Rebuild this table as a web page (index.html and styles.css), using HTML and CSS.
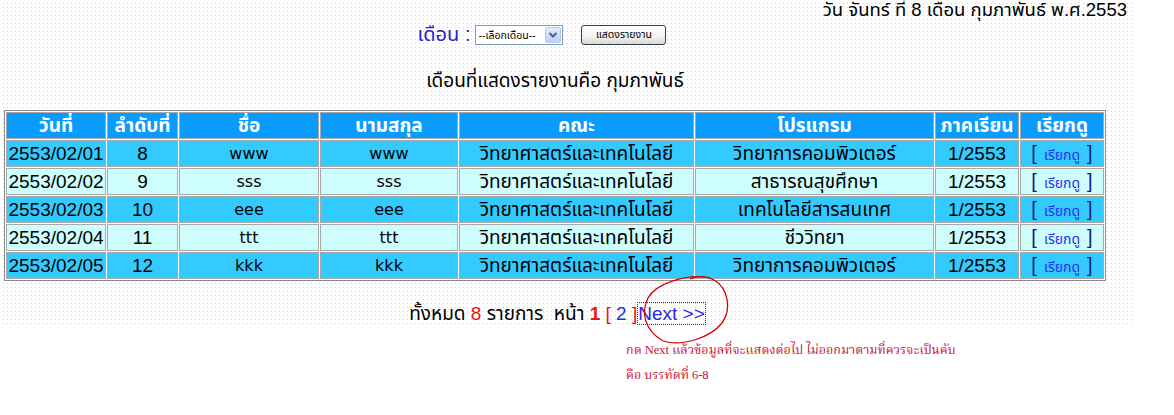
FILE: index.html
```html
<!DOCTYPE html>
<html lang="th">
<head>
<meta charset="utf-8">
<title>รายงาน</title>
<link rel="stylesheet" href="styles.css">
</head>
<body>
<div class="page">
  <div class="date">วัน จันทร์ ที่ 8 เดือน กุมภาพันธ์ พ.ศ.2553</div>
  <div class="main">
    <form class="picker">
      <span class="lbl">เดือน :</span>
      <span class="selbox"><select class="sel"><option>--เลือกเดือน--</option></select><span class="arrow"><svg width="14" height="14" viewBox="0 0 14 14"><path d="M3.5 5 L7 8.5 L10.5 5" fill="none" stroke="#4d6185" stroke-width="2"/></svg></span></span>
      <button type="button" class="btn">แสดงรายงาน</button>
    </form>
    <p class="current">เดือนที่แสดงรายงานคือ กุมภาพันธ์</p>
    <table class="report">
      <colgroup>
        <col style="width:100px"><col style="width:71px"><col style="width:140px"><col style="width:138px"><col style="width:235px"><col style="width:239px"><col style="width:84px"><col style="width:84px">
      </colgroup>
      <thead>
        <tr><th>วันที่</th><th>ลำดับที่</th><th>ชื่อ</th><th>นามสกุล</th><th>คณะ</th><th>โปรแกรม</th><th>ภาคเรียน</th><th>เรียกดู</th></tr>
      </thead>
      <tbody>
        <tr class="odd"><td>2553/02/01</td><td>8</td><td class="lat">www</td><td class="lat">www</td><td>วิทยาศาสตร์และเทคโนโลยี</td><td>วิทยาการคอมพิวเตอร์</td><td>1/2553</td><td><span class="br">[</span><a href="#">เรียกดู</a><span class="br">]</span></td></tr>
        <tr class="even"><td>2553/02/02</td><td>9</td><td class="lat">sss</td><td class="lat">sss</td><td>วิทยาศาสตร์และเทคโนโลยี</td><td>สาธารณสุขศึกษา</td><td>1/2553</td><td><span class="br">[</span><a href="#">เรียกดู</a><span class="br">]</span></td></tr>
        <tr class="odd"><td>2553/02/03</td><td>10</td><td class="lat">eee</td><td class="lat">eee</td><td>วิทยาศาสตร์และเทคโนโลยี</td><td>เทคโนโลยีสารสนเทศ</td><td>1/2553</td><td><span class="br">[</span><a href="#">เรียกดู</a><span class="br">]</span></td></tr>
        <tr class="even"><td>2553/02/04</td><td>11</td><td class="lat">ttt</td><td class="lat">ttt</td><td>วิทยาศาสตร์และเทคโนโลยี</td><td>ชีววิทยา</td><td>1/2553</td><td><span class="br">[</span><a href="#">เรียกดู</a><span class="br">]</span></td></tr>
        <tr class="odd"><td>2553/02/05</td><td>12</td><td class="lat">kkk</td><td class="lat">kkk</td><td>วิทยาศาสตร์และเทคโนโลยี</td><td>วิทยาการคอมพิวเตอร์</td><td>1/2553</td><td><span class="br">[</span><a href="#">เรียกดู</a><span class="br">]</span></td></tr>
      </tbody>
    </table>
    <div class="pager">ทั้งหมด <span class="red">8</span> รายการ &nbsp;หน้า <b class="red">1</b> <span class="red">[</span> <a href="#" class="pg">2</a> <span class="red">]</span><a href="#" class="next">Next &gt;&gt;</a></div>
  </div>
</div>
<div class="note">
  <p>กด Next แล้วข้อมูลที่จะแสดงต่อไป ไม่ออกมาตามที่ควรจะเป็นคับ</p>
  <p>คือ บรรทัดที่ 6-8</p>
</div>
<svg class="mark" width="1174" height="415" viewBox="0 0 1174 415"><path d="M704 277 C686 275 656 283 648 298 C641 312 644 330 663 341 C683 347 711 337 722 323 C732 309 728 288 714 280 C707 276 698 276 690 279" fill="none" stroke="#d40000" stroke-width="1.3"/></svg>
</body>
</html>
```
FILE: styles.css
```css
html, body {
  margin: 0;
  padding: 0;
  background: #fff;
}
body {
  position: relative;
  width: 1174px;
  height: 415px;
  overflow: hidden;
  font-family: "Liberation Sans", "Noto Sans Thai", "Noto Sans Thai UI", sans-serif;
  color: #000;
}
.page {
  width: 1135px;
  height: 326px;
  background-color: #fff;
  background-image:
    linear-gradient(to right, #fff 3px, transparent 3px),
    linear-gradient(to bottom, #fff 3px, #d4d4d4 3px);
  background-size: 4px 4px;
  overflow: hidden;
}
.date {
  text-align: right;
  padding-right: 8px;
  font-size: 18.5px;
  line-height: 20px;
  margin-top: 0;
}
.main {
  width: 1110px;
  display: flex;
  flex-direction: column;
  align-items: center;
}
.picker {
  display: flex;
  align-items: center;
  margin: 4px 26px 0 0;
  height: 22px;
}
.lbl {
  color: #2424c8;
  font-size: 20px;
  margin-right: 5px;
}
.selbox {
  display: flex;
  width: 88px;
  height: 20px;
  box-sizing: border-box;
  border: 1px solid #7f9db9;
  background: #fff;
}
.sel {
  appearance: none;
  -webkit-appearance: none;
  border: 0;
  background: transparent;
  font: 10.5px "Liberation Sans", "Noto Sans Thai", sans-serif;
  padding: 0 0 0 2px;
  width: 70px;
  height: 18px;
  color: #000;
}
.arrow {
  width: 16px;
  height: 16px;
  margin: 1px;
  box-sizing: border-box;
  border: 1px solid #b9cbf3;
  border-radius: 2px;
  background: linear-gradient(#e1ebfd, #bccff8);
  display: flex;
  align-items: center;
  justify-content: center;
}
.btn {
  margin-left: 18px;
  width: 85px;
  height: 20px;
  box-sizing: border-box;
  border: 1px solid #2e3e55;
  border-radius: 3px;
  background: linear-gradient(#ffffff, #f3f2ee 60%, #d9d6c9);
  font: 10.5px "Liberation Sans", "Noto Sans Thai", sans-serif;
  color: #000;
  padding: 0;
}
.current {
  margin: 24px 0 0;
  font-size: 19px;
  line-height: 22px;
}
.report {
  margin-top: 18px;
  table-layout: fixed;
  width: 1102px;
  border: 1px solid #8c8c8c;
  border-spacing: 1px;
  background: #fff;
  font-size: 19px;
}
.report th, .report td {
  border: 1px solid #a8a8a8;
  padding: 0;
  height: 25px;
  line-height: 22px;
  text-align: center;
  white-space: nowrap;
  overflow: hidden;
}
.report td.lat {
  font-family: "DejaVu Sans", sans-serif;
  font-size: 16px;
}
.report th {
  background: #0a9bff;
  color: #fff;
  font-weight: bold;
}
.odd td { background: #33cbff; }
.even td { background: #cdfdfd; }
.br {
  color: #1a1a80;
  font-size: 20px;
  font-weight: 300;
}
.report a {
  color: #2c2cf0;
  font-size: 14px;
  text-decoration: none;
  margin: 0 7px;
}
.pager {
  margin-top: 22px;
  font-size: 19px;
  line-height: 22px;
  padding-left: 4px;
}
.red { color: #ee1111; }
.pg { color: #2a2adc; text-decoration: none; }
.next {
  color: #2a2adc;
  text-decoration: none;
  outline: 1px dotted #333;
  outline-offset: 0;
  margin-left: 1px;
}
.note {
  margin: 15px 0 0 626px;
  color: #c8102e;
  font-family: "Liberation Serif", "Noto Serif Thai", "Noto Sans Thai", serif;
  font-size: 12.5px;
}
.note p {
  margin: 0 0 7px;
  line-height: 18px;
}
.mark {
  position: absolute;
  left: 0;
  top: 0;
  pointer-events: none;
}
```
